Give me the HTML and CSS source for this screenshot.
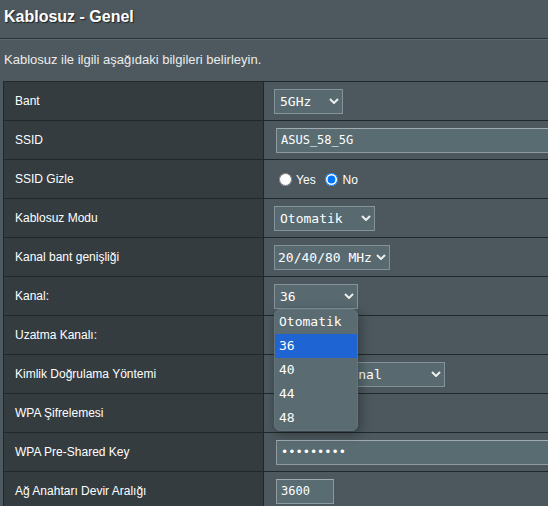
FILE: index.html
```html
<!DOCTYPE html>
<html lang="tr">
<head>
    <meta charset="UTF-8" />
    <title>Kablosuz - Genel</title>
    <link rel="stylesheet" href="styles.css">
</head>
<body>
    <div class="title">Kablosuz - Genel</div>
    <div class="divider"></div>
    <div class="desc">Kablosuz ile ilgili aşağıdaki bilgileri belirleyin.</div>

    <table class="form-table">
        <tr>
            <th>Bant</th>
            <td>
                <div class="select w-band"><span>5GHz</span>
                    <svg class="chev" width="10" height="6" viewBox="0 0 10 6"><path d="M1 1l4 4 4-4"/></svg>
                </div>
            </td>
        </tr>
        <tr>
            <th>SSID</th>
            <td><input class="field w-ssid" type="text" value="ASUS_58_5G"></td>
        </tr>
        <tr>
            <th>SSID Gizle</th>
            <td>
                <label class="radio"><input type="radio" name="hide"> Yes</label>
                <label class="radio"><input type="radio" name="hide" checked> No</label>
            </td>
        </tr>
        <tr>
            <th>Kablosuz Modu</th>
            <td>
                <div class="select w-mode"><span>Otomatik</span>
                    <svg class="chev" width="10" height="6" viewBox="0 0 10 6"><path d="M1 1l4 4 4-4"/></svg>
                </div>
            </td>
        </tr>
        <tr>
            <th>Kanal bant genişliği</th>
            <td>
                <div class="select w-bw"><span>20/40/80 MHz</span>
                    <svg class="chev" width="10" height="6" viewBox="0 0 10 6"><path d="M1 1l4 4 4-4"/></svg>
                </div>
            </td>
        </tr>
        <tr>
            <th>Kanal:</th>
            <td>
                <div class="select w-chan"><span>36</span>
                    <svg class="chev" width="10" height="6" viewBox="0 0 10 6"><path d="M1 1l4 4 4-4"/></svg>
                    <!-- açık kanal listesi -->
                    <ul class="options">
                        <li>Otomatik</li>
                        <li class="selected">36</li>
                        <li>40</li>
                        <li>44</li>
                        <li>48</li>
                    </ul>
                </div>
            </td>
        </tr>
        <tr>
            <th>Uzatma Kanalı:</th>
            <td></td>
        </tr>
        <tr>
            <th>Kimlik Doğrulama Yöntemi</th>
            <td>
                <div class="select w-auth"><span>WPA2-Personal</span>
                    <svg class="chev" width="10" height="6" viewBox="0 0 10 6"><path d="M1 1l4 4 4-4"/></svg>
                </div>
            </td>
        </tr>
        <tr>
            <th>WPA Şifrelemesi</th>
            <td></td>
        </tr>
        <tr>
            <th>WPA Pre-Shared Key</th>
            <td><input class="field w-ssid" type="password" value="123456789"></td>
        </tr>
        <tr>
            <th>Ağ Anahtarı Devir Aralığı</th>
            <td><input class="field w-num" type="text" value="3600"></td>
        </tr>
    </table>
</body>
</html>
```

FILE: styles.css
```css
html, body {
    margin: 0;
    overflow: hidden;
}

body {
    width: 548px;
    height: 506px;
    background: #4d595e;
    color: white;
    font-family: "Liberation Sans", Arial, sans-serif;
}

.title {
    padding: 7px 0 0 4px;
    font-size: 16px;
    font-weight: bold;
    line-height: 20px;
    text-shadow: 1px 1px 1px #1c2225;
}

.divider {
    margin-top: 11px;
    height: 1px;
    background: #2b3438;
    border-bottom: 1px solid #5a676c;
}

.desc {
    margin-top: 12px;
    padding-left: 4px;
    font-size: 13px;
    line-height: 16px;
    color: #ececec;
}

.form-table {
    margin: 13px 0 0 3px;
    border-collapse: collapse;
    table-layout: fixed;
    width: 640px;
}

.form-table th,
.form-table td {
    border: 1px solid #20282b;
    height: 38px;
    padding: 0;
    vertical-align: middle;
}

.form-table th {
    width: 248px;
    padding-left: 11px;
    background: #343c3f;
    font-size: 12px;
    font-weight: normal;
    text-align: left;
}

.form-table td {
    padding-left: 10px;
    background: #4c585e;
}

/* açılır kutular */
.select {
    position: relative;
    display: inline-flex;
    align-items: center;
    justify-content: space-between;
    box-sizing: border-box;
    height: 25px;
    padding: 0 3px 0 5px;
    border: 1px solid #84939a;
    background: #586a70;
    font-family: "DejaVu Sans Mono", monospace;
    font-size: 13px;
    vertical-align: middle;
}

.chev {
    fill: none;
    stroke: #eeeeee;
    stroke-width: 2;
}

.w-band { width: 69px; }
.w-mode { width: 101px; }
.w-bw { width: 116px; padding-left: 3px; }
.w-chan { width: 84px; }
.w-auth { width: 171px; }

.options {
    position: absolute;
    top: calc(100% + 1px);
    left: -1px;
    z-index: 10;
    width: 84px;
    box-sizing: border-box;
    margin: 0;
    padding: 0;
    list-style: none;
    border: 1px solid #62737a;
    border-radius: 6px;
    background: #5a6b71;
    box-shadow: 2px 3px 12px rgba(0,0,0,0.35);
    overflow: hidden;
}

.options li {
    height: 24px;
    line-height: 24px;
    padding-left: 4px;
}

.options li.selected {
    background: #1e64d2;
}

/* metin kutuları */
.field {
    box-sizing: border-box;
    height: 25px;
    margin: 0 0 0 2px;
    padding: 0 4px;
    border: 1px solid #8d9a9e;
    border-top-color: #a0acb0;
    background: #596c72;
    color: white;
    font-family: "DejaVu Sans Mono", monospace;
    font-size: 12px;
    vertical-align: middle;
}

.w-ssid { width: 320px; }
.w-num { width: 58px; }

.radio {
    font-size: 12px;
}

.radio input {
    margin: 0 1px 0 5px;
    vertical-align: -2px;
}
```
